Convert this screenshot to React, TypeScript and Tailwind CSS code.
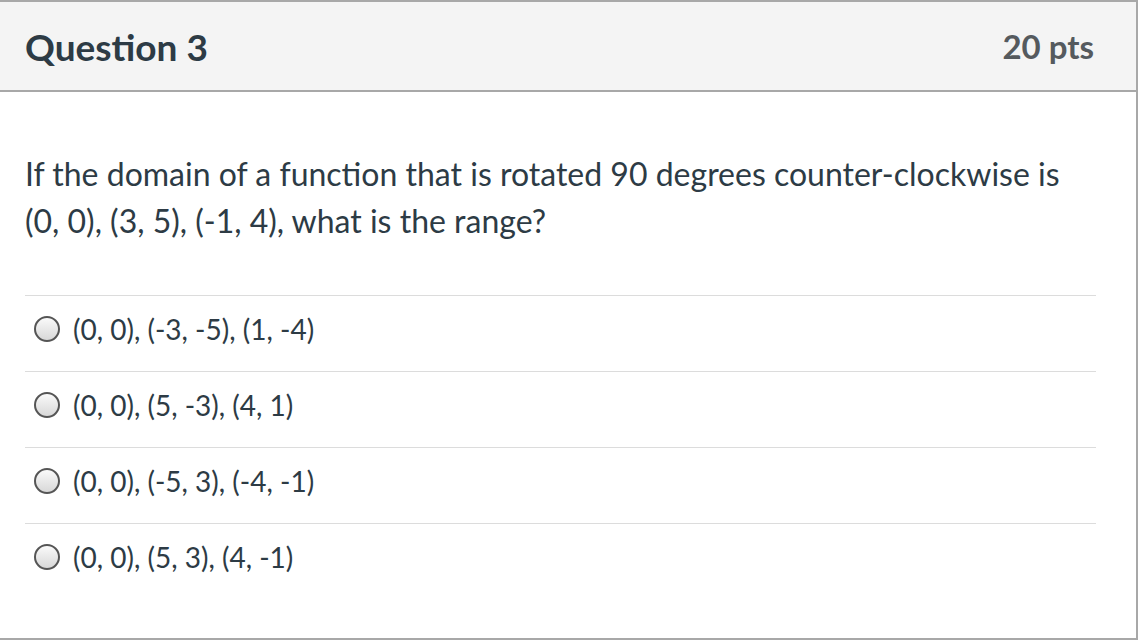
export default function App() {
  const answers = [
    '(0, 0), (-3, -5), (1, -4)',
    '(0, 0), (5, -3), (4, 1)',
    '(0, 0), (-5, 3), (-4, -1)',
    '(0, 0), (5, 3), (4, -1)',
  ];

  return (
    <div className="w-[1138px] h-[643px] bg-white" style={{ fontFamily: 'Lato, "Noto Sans", sans-serif' }}>
      <div className="h-[640px] border-t-2 border-r-2 border-b-2 border-[#a8a8a8] flex flex-col">
        {/* header */}
        <div className="h-[90px] shrink-0 bg-[#f4f4f4] border-b-2 border-[#a8a8a8] flex items-center justify-between pl-[25px] pr-[42px]">
          <h2 className="text-[37px] font-bold text-[#2d3b45] leading-none">Question 3</h2>
          <span className="text-[33px] font-bold text-[#555a5e] leading-none">20 pts</span>
        </div>

        {/* body */}
        <div className="pl-[25px] pr-[40px] pt-[58px]">
          <p className="text-[32px] leading-[47px] text-[#2d3b45]">
            If the domain of a function that is rotated 90 degrees counter-clockwise is (0, 0), (3, 5), (-1, 4), what is the range?
          </p>

          <div className="mt-[51px]">
            {answers.map((a) => (
              <label key={a} className="h-[76px] border-t border-[#dcdcdc] flex items-center gap-[13px] pl-[9px] pb-[9px]">
                <span className="w-[26px] h-[26px] rounded-full border-2 border-[#555] bg-gradient-to-b from-[#fafafa] to-[#d8d8d8]" />
                <span className="text-[28px] text-[#2d3b45]">{a}</span>
              </label>
            ))}
          </div>
        </div>
      </div>
    </div>
  );
}
